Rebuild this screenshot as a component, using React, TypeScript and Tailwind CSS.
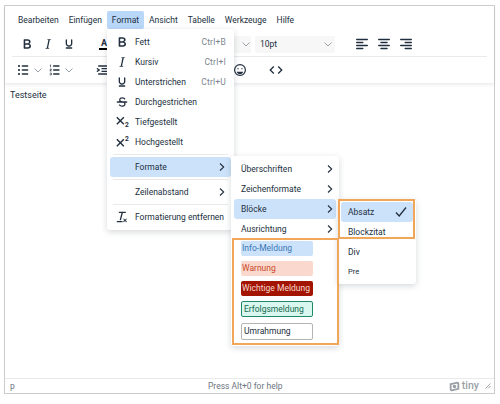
import type { ReactNode } from "react";

const FONT = "font-['Roboto','Open_Sans',sans-serif]";

const Ico = ({ d, size = 16 }: { d: string; size?: number }) => (
  <svg width={size} height={size} viewBox="0 0 24 24" className="shrink-0 fill-[#222f3e]">
    <path d={d} />
  </svg>
);

const P = {
  bold: "M7.8 19c-.3 0-.5 0-.6-.2l-.2-.5V5.7c0-.2 0-.4.2-.5l.6-.2h5c1.5 0 2.7.3 3.5 1 .7.6 1.1 1.4 1.1 2.5a3 3 0 0 1-.6 1.9c-.4.6-1 1-1.6 1.2.4.1.9.3 1.3.6s.8.7 1 1.2c.4.4.5 1 .5 1.6 0 1.3-.4 2.3-1.3 3-.8.7-2.1 1-3.8 1H7.8Zm5-8.3c.6 0 1.2-.1 1.6-.5.4-.3.6-.7.6-1.3 0-1.1-.8-1.7-2.3-1.7H9.3v3.5h3.4Zm.5 6c.7 0 1.3-.1 1.7-.4.4-.4.6-.9.6-1.5s-.2-1-.7-1.4c-.4-.3-1-.4-2-.4H9.4v3.8h4Z",
  italic: "M16.7 4.7l-.1.9h-.3c-.6 0-1 0-1.4.3-.3.3-.4.6-.5 1.1l-2.1 9.8v.6c0 .5.4.8 1.4.8h.2l-.2.8H8l.2-.8h.2c1.1 0 1.8-.5 2-1.5l2-9.8.1-.5c0-.6-.4-.8-1.4-.8h-.3l.2-.9h5.8Z",
  underline: "M16 5c.6 0 1 .4 1 1v5.5a4 4 0 0 1-.4 1.8l-1 1.4a5.3 5.3 0 0 1-5.5 1 5 5 0 0 1-1.6-1c-.5-.4-.8-.9-1.1-1.4a4 4 0 0 1-.4-1.8V6c0-.6.4-1 1-1s1 .4 1 1v5.5c0 .3 0 .6.2 1l.6.7a3.3 3.3 0 0 0 2.2.8 3.4 3.4 0 0 0 2.2-.8c.3-.2.4-.5.6-.8l.2-.9V6c0-.6.4-1 1-1ZM8 17h8c.6 0 1 .4 1 1s-.4 1-1 1H8a1 1 0 0 1 0-2Z",
  strike: "M15.6 8.5c-.5-.7-1-1.1-1.3-1.3-.6-.4-1.3-.6-2-.6-2.7 0-2.8 1.7-2.8 2.1 0 1.6 1.8 2 3.2 2.3 4.4.9 4.6 2.8 4.6 3.9 0 1.4-.7 4.1-5 4.1A6.2 6.2 0 0 1 7 16.4l1.5-1.1c.4.6 1.6 2 3.7 2 1.6 0 2.5-.4 3-1.2.4-.8.3-2-.8-2.6-.7-.4-1.6-.7-2.9-1-1-.2-3.9-.8-3.9-3.6C7.6 6 10.3 5 12.4 5c2.9 0 4.2 1.6 4.7 2.4l-1.5 1.1ZM5 11h14a1 1 0 0 1 0 2H5a1 1 0 0 1 0-2Z",
  clear: "M13.2 6a1 1 0 0 1 0 .2l-2.6 10a1 1 0 0 1-1 .8h-.2a.8.8 0 0 1-.8-1l2.6-10H8a1 1 0 1 1 0-2h9a1 1 0 0 1 0 2h-3.8ZM5 18h7a1 1 0 0 1 0 2H5a1 1 0 0 1 0-2Zm13 1.5L16.5 18 15 19.5a.7.7 0 0 1-1-1l1.5-1.5-1.5-1.5a.7.7 0 0 1 1-1l1.5 1.5 1.5-1.5a.7.7 0 0 1 1 1L17.5 17l1.5 1.5a.7.7 0 0 1-1 1Z",
  x: "M3.5 6.5 5 5l4.5 4.6L14 5l1.5 1.5L11 11l4.5 4.6L14 17l-4.5-4.5L5 17l-1.5-1.4L8 11 3.5 6.5Z",
  alignLeft: "M5 5h14a1 1 0 0 1 0 2H5a1 1 0 1 1 0-2Zm0 4h8a1 1 0 0 1 0 2H5a1 1 0 0 1 0-2Zm0 8h8a1 1 0 0 1 0 2H5a1 1 0 0 1 0-2Zm0-4h14a1 1 0 0 1 0 2H5a1 1 0 0 1 0-2Z",
  alignCenter: "M5 5h14a1 1 0 0 1 0 2H5a1 1 0 1 1 0-2Zm3 4h8a1 1 0 0 1 0 2H8a1 1 0 1 1 0-2Zm0 8h8a1 1 0 0 1 0 2H8a1 1 0 0 1 0-2Zm-3-4h14a1 1 0 0 1 0 2H5a1 1 0 0 1 0-2Z",
  alignRight: "M5 5h14a1 1 0 0 1 0 2H5a1 1 0 1 1 0-2Zm6 4h8a1 1 0 0 1 0 2h-8a1 1 0 0 1 0-2Zm0 8h8a1 1 0 0 1 0 2h-8a1 1 0 0 1 0-2Zm-6-4h14a1 1 0 0 1 0 2H5a1 1 0 0 1 0-2Z",
  bullist: "M11 5h8c.6 0 1 .4 1 1s-.4 1-1 1h-8a1 1 0 0 1 0-2Zm0 6h8c.6 0 1 .4 1 1s-.4 1-1 1h-8a1 1 0 0 1 0-2Zm0 6h8c.6 0 1 .4 1 1s-.4 1-1 1h-8a1 1 0 0 1 0-2ZM4.5 6c0-.4.1-.8.4-1 .3-.4.7-.5 1.1-.5s.8.1 1 .4c.4.3.5.7.5 1.1s-.1.8-.4 1c-.3.4-.7.5-1.1.5s-.8-.1-1-.4c-.4-.3-.5-.7-.5-1.1Zm0 6c0-.4.1-.8.4-1 .3-.4.7-.5 1.1-.5s.8.1 1 .4c.4.3.5.7.5 1.1s-.1.8-.4 1c-.3.4-.7.5-1.1.5s-.8-.1-1-.4c-.4-.3-.5-.7-.5-1.1Zm0 6c0-.4.1-.8.4-1 .3-.4.7-.5 1.1-.5s.8.1 1 .4c.4.3.5.7.5 1.1s-.1.8-.4 1c-.3.4-.7.5-1.1.5s-.8-.1-1-.4c-.4-.3-.5-.7-.5-1.1Z",
  numlist: "M10 17h8c.6 0 1 .4 1 1s-.4 1-1 1h-8a1 1 0 0 1 0-2Zm0-6h8c.6 0 1 .4 1 1s-.4 1-1 1h-8a1 1 0 0 1 0-2Zm0-6h8c.6 0 1 .4 1 1s-.4 1-1 1h-8a1 1 0 1 1 0-2ZM6 4v3.5c0 .3-.2.5-.5.5a.5.5 0 0 1-.5-.5V5h-.5a.5.5 0 0 1 0-1H6Zm-1 8.8.2.2h1.3c.3 0 .5.2.5.5s-.2.5-.5.5H4.9a1 1 0 0 1-.9-1V13c0-.4.3-.8.6-1l1.2-.4.2-.3a.2.2 0 0 0-.2-.2H4.5a.5.5 0 0 1-.5-.5c0-.3.2-.5.5-.5h1.6c.5 0 .9.4.9 1v.1c0 .4-.3.8-.6 1l-1.2.4-.2.3ZM7 17v2c0 .6-.4 1-1 1H4.5a.5.5 0 0 1 0-1h1.2c.2 0 .3-.1.3-.3 0-.2-.1-.3-.3-.3H4.4a.4.4 0 1 1 0-.8h1.3c.2 0 .3-.1.3-.3 0-.2-.1-.3-.3-.3H4.5a.5.5 0 1 1 0-1H6c.6 0 1 .4 1 1Z",
  indent: "M7 5h12c.6 0 1 .4 1 1s-.4 1-1 1H7a1 1 0 1 1 0-2Zm5 4h7c.6 0 1 .4 1 1s-.4 1-1 1h-7a1 1 0 0 1 0-2Zm0 4h7c.6 0 1 .4 1 1s-.4 1-1 1h-7a1 1 0 0 1 0-2Zm-5 4h12a1 1 0 0 1 0 2H7a1 1 0 0 1 0-2Zm-2.6-3.8L6.2 12l-1.8-1.2a1 1 0 0 1 1.2-1.6l3 2a1 1 0 0 1 0 1.6l-3 2a1 1 0 1 1-1.2-1.6Z",
  emoji: "M9 11c.6 0 1-.4 1-1s-.4-1-1-1-1 .4-1 1 .4 1 1 1Zm6 0c.6 0 1-.4 1-1s-.4-1-1-1-1 .4-1 1 .4 1 1 1Zm-3 7c2.3 0 4.3-1.5 5-3.5H7c.7 2 2.7 3.5 5 3.5Zm0-15a9 9 0 1 0 0 18 9 9 0 0 0 0-18Zm0 16.2a7.2 7.2 0 1 1 0-14.4 7.2 7.2 0 0 1 0 14.4Z",
  code: "M9.4 7.4 8 6l-6 6 6 6 1.4-1.4L4.8 12l4.6-4.6Zm5.2 0L16 6l6 6-6 6-1.4-1.4 4.6-4.6-4.6-4.6Z",
};

const Chevron = () => (
  <svg width="10" height="10" viewBox="0 0 10 10" className="shrink-0 fill-none stroke-[#9aa1a9]">
    <path d="M1.5 3.5 5 7l3.5-3.5" />
  </svg>
);

const Arrow = () => (
  <svg width="8" height="10" viewBox="0 0 8 10" className="ml-auto shrink-0 fill-none stroke-[#222f3e] stroke-[1.1]">
    <path d="M2 1.5 5.7 5 2 8.5" />
  </svg>
);

const ScriptIcon = ({ digit, sup }: { digit: string; sup?: boolean }) => (
  <svg width="16" height="16" viewBox="0 0 24 24" className="shrink-0 fill-[#222f3e]">
    <path d={P.x} transform={sup ? "translate(0 2)" : "translate(0 -1)"} />
    <text x="16.5" y={sup ? 10 : 20} fontSize="10" fontWeight="700" fontFamily="Roboto">
      {digit}
    </text>
  </svg>
);

const MenuRow = ({
  icon,
  label,
  shortcut,
  arrow,
  active,
}: {
  icon?: ReactNode;
  label: string;
  shortcut?: string;
  arrow?: boolean;
  active?: boolean;
}) => (
  <div className={`flex h-5 items-center rounded-[3px] pl-[3px] pr-[5px] ${active ? "bg-[#cce2fa]" : ""}`}>
    <div className="flex w-[22px] shrink-0 items-center justify-start pl-[1px]">{icon}</div>
    <span className="whitespace-nowrap pt-px">{label}</span>
    {shortcut && <span className="ml-auto whitespace-nowrap pt-px text-[8.5px] tracking-[0.2px] text-[#7c8591]">{shortcut}</span>}
    {arrow && <Arrow />}
  </div>
);

const SubRow = ({ label, arrow, active, check }: { label: string; arrow?: boolean; active?: boolean; check?: boolean }) => (
  <div className={`flex h-5 items-center rounded-[3px] pl-[7px] pr-[2px] ${active ? "bg-[#cce2fa]" : ""}`}>
    <span className="whitespace-nowrap pt-px">{label}</span>
    {arrow && <Arrow />}
    {check && (
      <svg width="12" height="12" viewBox="0 0 12 12" className="ml-auto mr-[4px] fill-none stroke-[#222f3e] stroke-[1.3]">
        <path d="M1 6.5 4.2 10 11 1.5" />
      </svg>
    )}
  </div>
);

const Divider = () => <div className="mx-[3px] my-[2px] h-px bg-[#e8eaec]" />;

const shadow = "shadow-[0_2px_6px_rgba(34,47,62,0.18)]";

const styleBox = "flex w-[72px] items-center whitespace-nowrap rounded-[2px]";

export default function App() {
  return (
    <div className={`relative h-[404px] w-[500px] overflow-hidden bg-white pl-1 pt-[5px] text-[8.5px] text-[#222f3e] ${FONT}`}>
      <div className="flex h-[389px] w-[491px] flex-col border border-[#cccccc]">
        <div className="z-10 bg-white shadow-[0_2px_3px_rgba(34,47,62,0.09)]">
          <div className="flex h-[23px] items-end pl-[8px]">
            {["Bearbeiten", "Einfügen", "Format", "Ansicht", "Tabelle", "Werkzeuge", "Hilfe"].map((m) => (
              <div
                key={m}
                className={`flex h-[18px] items-center rounded-[2px] px-[5px] ${m === "Format" ? "bg-[#b9d7f8]" : ""}`}
              >
                {m}
              </div>
            ))}
          </div>
          <div className="mx-[7px] flex h-[28px] items-center border-b border-[#e8eaec] pl-[7px] pt-[3px]">
            <div className="flex w-[70px] gap-[5px]">
              <Ico d={P.bold} /> <Ico d={P.italic} /> <Ico d={P.underline} />
            </div>
            <div className="flex w-[30px] flex-col items-center">
              <span className="text-[9px] font-bold leading-[9px]">A</span>
              <div className="h-[2px] w-[10px] bg-black" />
            </div>
            <div className="ml-[114px] flex h-[17px] w-[18px] items-center rounded-r-[2px] bg-[#f7f7f7] pl-[8px]">
              <Chevron />
            </div>
            <div className="ml-[4px] flex h-[17px] w-[80px] items-center justify-between rounded-[2px] bg-[#f7f7f7] pl-[5px] pr-[2px]">
              <span>10pt</span>
              <Chevron />
            </div>
            <div className="ml-[18px] flex gap-[4px]">
              <Ico d={P.alignLeft} size={18} /> <Ico d={P.alignCenter} size={18} /> <Ico d={P.alignRight} size={18} />
            </div>
          </div>
          <div className="flex h-[26px] items-center pl-[10px]">
            <Ico d={P.bullist} />
            <div className="ml-[2px]"><Chevron /></div>
            <div className="ml-[4px]"><Ico d={P.numlist} /></div>
            <div className="ml-[1px]"><Chevron /></div>
            <div className="ml-[20px]"><Ico d={P.indent} /></div>
            <div className="ml-[122px]"><Ico d={P.emoji} /></div>
            <div className="ml-[20px]"><Ico d={P.code} /></div>
          </div>
        </div>
        <div className="flex-1 pl-[5px] pt-[6px] text-[9px]">Testseite</div>
        <div className="relative flex h-[15px] items-center justify-between border-t border-[#e8eaec] pl-[5px] pr-[3px] text-[#6d7682]">
          <span>p</span>
          <span className="absolute left-[203px]">Press Alt+0 for help</span>
          <div className="flex items-center gap-[2px]">
            <svg width="11" height="11" viewBox="0 0 12 12" className="fill-none stroke-[#9a9fa6] stroke-[2]">
              <path d="M2 3.5 9 1.8c.7 0 1.2.5 1.2 1.2v5.5L3 10.2c-.7 0-1.2-.5-1.2-1.2V3.5Z" />
              <circle cx="6" cy="6" r="1" />
            </svg>
            <span className="mr-[4px] text-[10.5px] font-medium leading-none text-[#9a9fa6]">tiny</span>
            <svg width="6" height="6" viewBox="0 0 6 6" className="stroke-[#8b929b] stroke-[0.8]">
              <path d="M0.5 5.5 5.5 0.5M3 5.5 5.5 3" />
            </svg>
          </div>
        </div>
      </div>

      <div className={`absolute left-[107px] top-[29px] z-20 h-[201px] w-[127px] rounded-[3px] bg-white px-[3px] pt-[3px] ${shadow}`}>
        <MenuRow icon={<Ico d={P.bold} />} label="Fett" shortcut="Ctrl+B" />
        <MenuRow icon={<Ico d={P.italic} />} label="Kursiv" shortcut="Ctrl+I" />
        <MenuRow icon={<Ico d={P.underline} />} label="Unterstrichen" shortcut="Ctrl+U" />
        <MenuRow icon={<Ico d={P.strike} />} label="Durchgestrichen" />
        <MenuRow icon={<ScriptIcon digit="2" />} label="Tiefgestellt" />
        <MenuRow icon={<ScriptIcon digit="2" sup />} label="Hochgestellt" />
        <Divider />
        <MenuRow label="Formate" arrow active />
        <Divider />
        <MenuRow label="Zeilenabstand" arrow />
        <Divider />
        <MenuRow icon={<Ico d={P.clear} />} label="Formatierung entfernen" />
      </div>

      <div className={`absolute left-[231px] top-[156px] z-30 h-[190px] w-[108px] rounded-[3px] bg-white px-[3px] pt-[3px] ${shadow}`}>
        <SubRow label="Überschriften" arrow />
        <SubRow label="Zeichenformate" arrow />
        <SubRow label="Blöcke" arrow active />
        <SubRow label="Ausrichtung" arrow />
        <div className="mt-[2px] flex flex-col items-start pl-[7px]">
          <div className={`${styleBox} h-[15px] bg-[#cce2fa] pl-[1px] text-[#3a78b5]`}>Info-Meldung</div>
          <div className={`${styleBox} mt-[5px] h-[15px] bg-[#fbd8cd] pl-[1px] text-[#c9492b]`}>Warnung</div>
          <div className={`${styleBox} mt-[5px] h-[15px] bg-[#a31400] pl-[1px] text-[#f6d8d0]`}>Wichtige Meldung</div>
          <div className={`${styleBox} mt-[5px] h-[16px] border border-[#1e8a6a] bg-[#d9f7ee] pl-[2px] text-[#11694f]`}>Erfolgsmeldung</div>
          <div className={`${styleBox} mt-[6px] h-[17px] border border-[#b4b4b4] bg-white pl-[2px]`}>Umrahmung</div>
        </div>
      </div>

      <div className={`absolute left-[338px] top-[199px] z-30 h-[85px] w-[78px] rounded-[3px] bg-white px-[3px] pt-[3px] ${shadow}`}>
        <SubRow label="Absatz" active check />
        <SubRow label="Blockzitat" />
        <SubRow label="Div" />
        <div className="flex h-5 items-center pl-[7px] text-[7.5px]">Pre</div>
      </div>

      <div className="absolute left-[232px] top-[238px] z-40 h-[107px] w-[107px] border-2 border-[#f2a65a]" />
      <div className="absolute left-[338px] top-[199px] z-40 h-[40px] w-[77px] border-2 border-[#f2a65a]" />
    </div>
  );
}
